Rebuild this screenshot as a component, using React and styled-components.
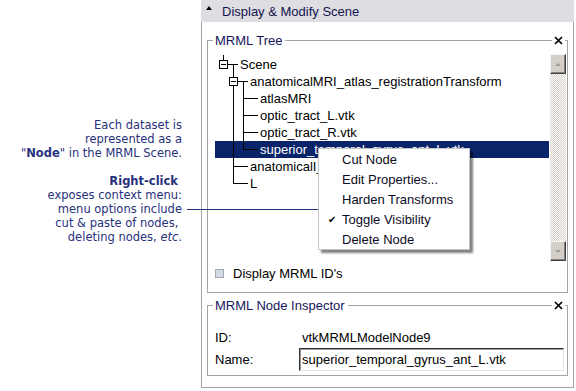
import React from 'react'
import styled, { createGlobalStyle } from 'styled-components'

const GlobalStyle = createGlobalStyle`
  html, body { margin: 0; padding: 0; background: #fff; }
  body { font-family: "Liberation Sans", Arial, sans-serif; }
`

const Page = styled.div`
  position: relative;
  width: 576px;
  height: 391px;
  display: flex;
  overflow: hidden;
  background: #fff;
`

const Notes = styled.div`
  width: 201px;
  box-sizing: border-box;
  padding: 118px 19px 0 0;
  text-align: right;
  font-family: "DejaVu Sans", Verdana, sans-serif;
  font-size: 11.5px;
  line-height: 14px;
  color: #28317c;
  p { margin: 0 0 14px; }
`

const Pointer = styled.div`
  position: absolute;
  left: 187px;
  top: 209px;
  width: 131px;
  border-top: 1px solid #28317c;
`

const Panel = styled.div`
  width: 373px;
  height: 388px;
  display: flex;
  flex-direction: column;
`

const Header = styled.div`
  height: 22px;
  display: flex;
  align-items: center;
  padding-left: 5px;
  background: #dddde2;
  font-size: 13px;
  color: #14144e;
`

const Caret = styled.span`
  align-self: flex-start;
  margin: 6px 10px 0 0;
  width: 0;
  height: 0;
  border-left: 3px solid transparent;
  border-right: 3px solid transparent;
  border-bottom: 4px solid #000;
`

const Body = styled.div`
  flex: 1;
  border: 1px solid #a4a4a4;
  border-top: none;
  padding: 18px 5px 0;
  display: flex;
  flex-direction: column;
`

const Group = styled.div`
  border: 1px solid #a4a4a4;
  border-top: none;
  margin-top: ${p => p.$gap || 0}px;
  padding: 0 ${p => p.$padRight || 1}px ${p => p.$padBottom || 0}px 7px;
`

const GroupHead = styled.div`
  display: flex;
  align-items: center;
  height: 15px;
  margin: -7px ${p => -(p.$padRight || 1)}px 0 -7px;
  &::before {
    content: '';
    width: 5px;
    border-top: 1px solid #a4a4a4;
  }
  &::after {
    content: '';
    width: 2px;
    border-top: 1px solid #a4a4a4;
  }
`

const GroupTitle = styled.span`
  padding: 0 3px 0 2px;
  font-size: 13px;
  line-height: 15px;
  color: #16165a;
`

const Rule = styled.span`
  flex: 1;
  border-top: 1px solid #a4a4a4;
`

const CloseIcon = styled.svg`
  margin: 0 2px 0 2px;
  flex: none;
`

const TreeView = styled.div`
  display: flex;
  height: 207px;
  margin-top: 6px;
`

const TreeList = styled.div`
  position: relative;
  flex: 1;
  padding-top: 2px;
`

const Lines = styled.svg`
  position: absolute;
  left: 0;
  top: 0;
  pointer-events: none;
`

const Row = styled.div`
  height: 17px;
  line-height: 17px;
  font-size: 13px;
  white-space: nowrap;
  overflow: hidden;
  padding-left: ${p => 25 + p.$depth * 10}px;
  background: ${p => (p.$selected ? '#0a246a' : 'transparent')};
  color: ${p => (p.$selected ? '#fff' : '#000')};
`

const ScrollBar = styled.div`
  width: 16px;
  margin-left: 1px;
  display: flex;
  flex-direction: column;
`

const ScrollButton = styled.div`
  height: 20px;
  box-sizing: border-box;
  background: #d4d0c8;
  border: 1px solid;
  border-color: #f4f4f4 #404040 #404040 #f4f4f4;
  box-shadow: inset -1px -1px #808080;
  display: flex;
  align-items: center;
  justify-content: center;
  &::after {
    content: '';
    border-left: 3px solid transparent;
    border-right: 3px solid transparent;
    ${p => (p.$down ? 'border-top' : 'border-bottom')}: 3px solid #9a9a9a;
  }
`

const Track = styled.div`
  flex: 1;
  background: repeating-conic-gradient(#d4d0c8 0 25%, #fff 0 50%) 0 0 / 2px 2px;
`

const CheckRow = styled.label`
  display: flex;
  align-items: center;
  height: 20px;
  margin-top: 2px;
  font-size: 13px;
  color: #000;
`

const CheckBox = styled.span`
  width: 9px;
  height: 9px;
  box-sizing: border-box;
  border: 1px solid #a4a8b2;
  background: #d3d9e6;
  margin-right: 9px;
`

const Fields = styled.div`
  display: grid;
  grid-template-columns: 84px 1fr;
  grid-template-rows: 22px 23px;
  align-items: center;
  margin-top: 13px;
  font-size: 13px;
  color: #000;
`

const Value = styled.span`
  padding-left: 3px;
`

const TextField = styled.input`
  box-sizing: border-box;
  width: 100%;
  height: 23px;
  margin: 0;
  padding: 0 2px;
  border: 1px solid;
  border-color: #303030 #e4e4e4 #e4e4e4 #303030;
  box-shadow: inset 1px 1px #9a9a9a;
  font: 13px "Liberation Sans", Arial, sans-serif;
  color: #000;
  outline: none;
`

const Menu = styled.div`
  position: absolute;
  left: 318px;
  top: 148px;
  width: 152px;
  box-sizing: border-box;
  background: #fff;
  border: 1px solid #c4c4c4;
  box-shadow: 3px 3px 2px rgba(0, 0, 0, 0.5);
`

const MenuItem = styled.div`
  display: flex;
  align-items: center;
  height: 20px;
  font-size: 13px;
  color: #0c0c24;
`

const CheckSlot = styled.span`
  width: 23px;
  box-sizing: border-box;
  padding-left: 9px;
  font-family: "DejaVu Sans", sans-serif;
  font-size: 10px;
  color: #000;
`

const tree = [
  { label: 'Scene', depth: 0 },
  { label: 'anatomicalMRI_atlas_registrationTransform', depth: 1 },
  { label: 'atlasMRI', depth: 2 },
  { label: 'optic_tract_L.vtk', depth: 2 },
  { label: 'optic_tract_R.vtk', depth: 2 },
  { label: 'superior_temporal_gyrus_ant_L.vtk', depth: 2, selected: true },
  { label: 'anatomicalI_skin.vtk', depth: 1 },
  { label: 'L', depth: 1 },
]

const menuItems = ['Cut Node', 'Edit Properties...', 'Harden Transforms', 'Toggle Visibility', 'Delete Node']

function Close() {
  return (
    <CloseIcon width="9" height="9" viewBox="0 0 9 9">
      <path d="M1 1L8 8M8 1L1 8" stroke="#000" strokeWidth="1.7" />
    </CloseIcon>
  )
}

function TreeLines() {
  const mid = i => 2 + i * 17 + 8.5
  return (
    <Lines width="50" height="140" shapeRendering="crispEdges">
      <g stroke="#000" strokeWidth="1" fill="none">
        <line x1="8.5" y1="1" x2="8.5" y2="6.5" />
        <line x1="12.5" y1={mid(0)} x2="23" y2={mid(0)} />
        <line x1="18.5" y1={mid(0)} x2="18.5" y2={mid(7)} />
        <line x1="22.5" y1={mid(1)} x2="33" y2={mid(1)} />
        <line x1="28.5" y1={mid(1)} x2="28.5" y2={mid(5)} />
        {[2, 3, 4, 5].map(i => (
          <line key={i} x1="28.5" y1={mid(i)} x2="43" y2={mid(i)} />
        ))}
        {[6, 7].map(i => (
          <line key={i} x1="18.5" y1={mid(i)} x2="33" y2={mid(i)} />
        ))}
        <rect x="4.5" y={mid(0) - 4} width="8" height="8" fill="#fff" />
        <line x1="6" y1={mid(0)} x2="11" y2={mid(0)} />
        <rect x="14.5" y={mid(1) - 4} width="8" height="8" fill="#fff" />
        <line x1="16" y1={mid(1)} x2="21" y2={mid(1)} />
      </g>
    </Lines>
  )
}

export default function App() {
  return (
    <Page>
      <GlobalStyle />
      <Notes>
        <p>
          Each dataset is<br />
          represented as a<br />
          "<b>Node</b>" in the MRML Scene.
        </p>
        <p>
          <b>{'Right-click\u00a0'}</b><br />
          exposes context menu:<br />
          menu options include<br />
          {'cut & paste of nodes,\u00a0'}<br />
          deleting nodes, <i>etc</i>.
        </p>
      </Notes>
      <Panel>
        <Header>
          <Caret />
          Display &amp; Modify Scene
        </Header>
        <Body>
          <Group $padRight={1} $padBottom={9}>
            <GroupHead $padRight={1}>
              <GroupTitle>MRML Tree</GroupTitle>
              <Rule />
              <Close />
            </GroupHead>
            <TreeView>
              <TreeList>
                {tree.map(n => (
                  <Row key={n.label} $depth={n.depth} $selected={n.selected}>
                    {n.label}
                  </Row>
                ))}
                <TreeLines />
              </TreeList>
              <ScrollBar>
                <ScrollButton />
                <Track />
                <ScrollButton $down />
              </ScrollBar>
            </TreeView>
            <CheckRow>
              <CheckBox />
              Display MRML ID's
            </CheckRow>
          </Group>
          <Group $gap={12} $padRight={3} $padBottom={4}>
            <GroupHead $padRight={3}>
              <GroupTitle>MRML Node Inspector</GroupTitle>
              <Rule />
              <Close />
            </GroupHead>
            <Fields>
              <span>ID:</span>
              <Value>vtkMRMLModelNode9</Value>
              <span>Name:</span>
              <TextField readOnly value="superior_temporal_gyrus_ant_L.vtk" />
            </Fields>
          </Group>
        </Body>
      </Panel>
      <Pointer />
      <Menu>
        {menuItems.map(item => (
          <MenuItem key={item}>
            <CheckSlot>{item === 'Toggle Visibility' ? '\u2714' : ''}</CheckSlot>
            {item}
          </MenuItem>
        ))}
      </Menu>
    </Page>
  )
}
